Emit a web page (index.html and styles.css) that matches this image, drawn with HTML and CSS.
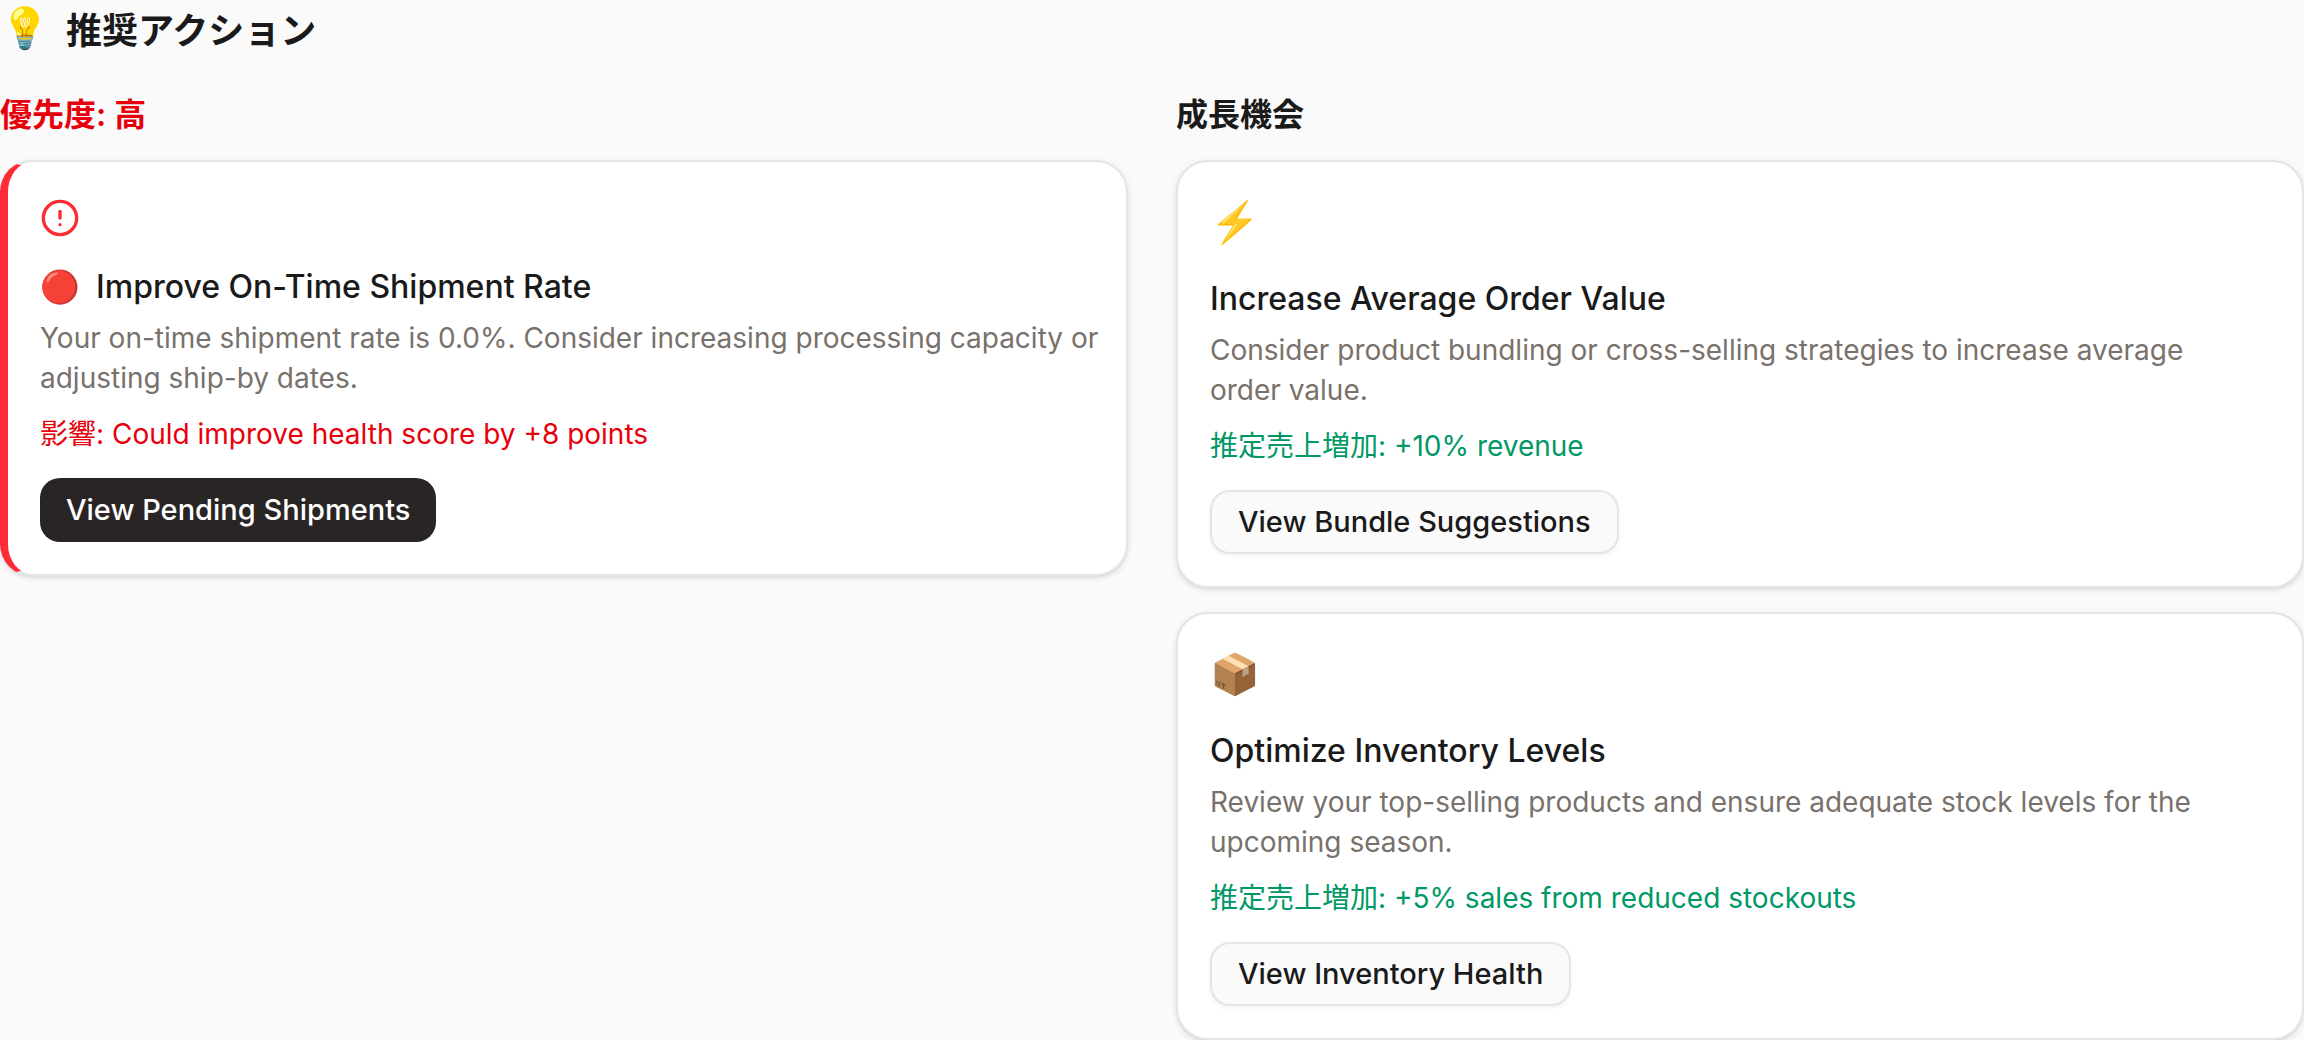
FILE: index.html
```html
<!DOCTYPE html>
<html lang="ja">
  <head>
    <meta charset="utf-8">
    <title>推奨アクション</title>
    <link rel="stylesheet" href="styles.css">
  </head>
  <body>
    <h2 class="page-title"><span class="emoji">💡</span>推奨アクション</h2>

    <div class="columns">
      <section>
        <h3 class="column-title high">優先度: 高</h3>
        <div class="card card-high">
          <svg class="alert-icon" viewBox="0 0 24 24" fill="none" stroke="currentColor" stroke-width="2" stroke-linecap="round" stroke-linejoin="round">
            <circle cx="12" cy="12" r="10"/>
            <line x1="12" x2="12" y1="8" y2="12"/>
            <line x1="12" x2="12.01" y1="16" y2="16"/>
          </svg>
          <h4 class="card-title"><span>🔴</span>Improve On-Time Shipment Rate</h4>
          <p class="description">Your on-time shipment rate is 0.0%. Consider increasing processing capacity or<br>adjusting ship-by dates.</p>
          <p class="impact high">影響: Could improve health score by +8 points</p>
          <button class="button button-dark">View Pending Shipments</button>
        </div>
      </section>

      <section>
        <h3 class="column-title">成長機会</h3>
        <div class="card">
          <span class="emoji">⚡</span>
          <h4 class="card-title">Increase Average Order Value</h4>
          <p class="description">Consider product bundling or cross-selling strategies to increase average<br>order value.</p>
          <p class="impact growth">推定売上増加: +10% revenue</p>
          <button class="button">View Bundle Suggestions</button>
        </div>
        <div class="card">
          <span class="emoji">📦</span>
          <h4 class="card-title">Optimize Inventory Levels</h4>
          <p class="description">Review your top-selling products and ensure adequate stock levels for the<br>upcoming season.</p>
          <p class="impact growth">推定売上増加: +5% sales from reduced stockouts</p>
          <button class="button">View Inventory Health</button>
        </div>
      </section>
    </div>
  </body>
</html>
```
FILE: styles.css
```css
* {
  box-sizing: border-box;
}

body {
  margin: 0;
  background-color: #fafafa;
  color: #1a1a1a;
  font-family: Inter, "Noto Sans CJK JP", sans-serif;
  font-size: 28px;
  line-height: 40px;
}

h2, h3, h4, p {
  margin: 0;
}

.page-title {
  display: flex;
  align-items: flex-start;
  gap: 16px;
  margin-bottom: 28px;
  font-size: 36px;
  font-weight: 600;
  line-height: 62px;
}

.emoji {
  font-size: 40px;
  font-weight: 400;
  line-height: 56px;
}

.columns {
  display: grid;
  grid-template-columns: minmax(0, 1fr) minmax(0, 1fr);
  gap: 48px;
}

.column-title {
  margin-bottom: 20px;
  font-size: 32px;
  font-weight: 600;
  line-height: 50px;
}

.high {
  color: #e7000b;
}

.growth {
  color: #009966;
}

.card {
  display: flex;
  flex-direction: column;
  align-items: flex-start;
  padding: 32px;
  background-color: #fff;
  border: 2px solid #e4e4e9;
  border-radius: 32px;
  box-shadow: 0 2px 6px rgba(0, 0, 0, 0.1), 0 2px 4px -2px rgba(0, 0, 0, 0.1);
}

.card + .card {
  margin-top: 24px;
}

.card-high {
  border-left: 8px solid #fb2c36;
}

.alert-icon {
  width: 40px;
  height: 40px;
  margin-top: 4px;
  color: #fb2c36;
}

.card-title {
  display: flex;
  gap: 16px;
  margin-top: 24px;
  font-size: 32px;
  font-weight: 500;
  line-height: 50px;
}

.description {
  margin-top: 6px;
  color: #79716b;
  white-space: nowrap;
}

.impact {
  margin-top: 16px;
}

.button {
  height: 64px;
  margin-top: 24px;
  padding: 0 26px;
  background-color: #fafafa;
  border: 2px solid #e4e4e9;
  border-radius: 20px;
  box-shadow: 0 2px 4px rgba(0, 0, 0, 0.05);
  color: #1a1a1a;
  font: inherit;
  font-size: 29px;
  font-weight: 500;
  cursor: pointer;
}

.button-dark {
  background-color: #292524;
  border: none;
  box-shadow: none;
  color: #fff;
}
```
